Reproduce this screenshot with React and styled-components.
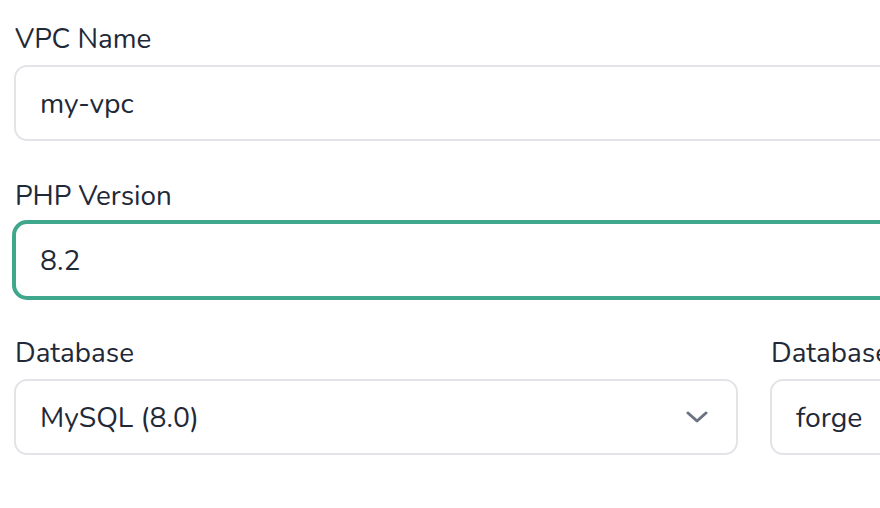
import React from "react";
import styled, { createGlobalStyle } from "styled-components";

const GlobalStyle = createGlobalStyle`
  html, body {
    margin: 0;
    padding: 0;
    background: #ffffff;
    overflow: hidden;
  }
  body {
    font-family: "Nunito", Lato, "Noto Sans", sans-serif;
    color: #1f2937;
  }
`;

const Form = styled.form`
  width: 1480px;
  padding: 21px 0 0 14px;
  display: flex;
  flex-direction: column;
  gap: 37px;
`;

const Row = styled.div`
  display: grid;
  grid-template-columns: ${(p) => (p.$split ? "1fr 1fr" : "1fr")};
  column-gap: 32px;
`;

const Field = styled.div`
  display: flex;
  flex-direction: column;
  gap: 8px;
`;

const Label = styled.label`
  font-size: 27.8px;
  line-height: 36px;
  color: #1f2937;
  padding-left: 1px;
  white-space: nowrap;
`;

const InputBox = styled.div`
  box-sizing: border-box;
  height: 76px;
  display: flex;
  align-items: center;
  padding: 0 24px;
  border: 2px solid ${(p) => (p.$focused ? "#3fa78c" : "#e3e4e8")};
  box-shadow: ${(p) => (p.$focused ? "0 0 0 2px #3fa78c" : "none")};
  border-radius: 13px;
  background: #ffffff;
  font-size: 28.3px;
  color: #1f2937;
`;

const Value = styled.span`
  flex: 1;
  white-space: nowrap;
`;

const Chevron = styled.svg`
  width: 22px;
  height: 12px;
  margin-right: 4px;
  flex: none;
`;

function Input({ value, focused }) {
  return (
    <InputBox $focused={focused}>
      <Value>{value}</Value>
    </InputBox>
  );
}

function Select({ value }) {
  return (
    <InputBox>
      <Value>{value}</Value>
      <Chevron viewBox="0 0 22 12" fill="none">
        <path
          d="M2 2l9 8 9-8"
          stroke="#6b7280"
          strokeWidth="3"
          strokeLinecap="round"
          strokeLinejoin="round"
        />
      </Chevron>
    </InputBox>
  );
}

export default function App() {
  return (
    <>
      <GlobalStyle />
      <Form>
        <Row>
          <Field>
            <Label>VPC Name</Label>
            <Input value="my-vpc" />
          </Field>
        </Row>
        <Row>
          <Field>
            <Label>PHP Version</Label>
            <Input value="8.2" focused />
          </Field>
        </Row>
        <Row $split>
          <Field>
            <Label>Database</Label>
            <Select value="MySQL (8.0)" />
          </Field>
          <Field>
            <Label>Database Name</Label>
            <Input value="forge" />
          </Field>
        </Row>
      </Form>
    </>
  );
}
